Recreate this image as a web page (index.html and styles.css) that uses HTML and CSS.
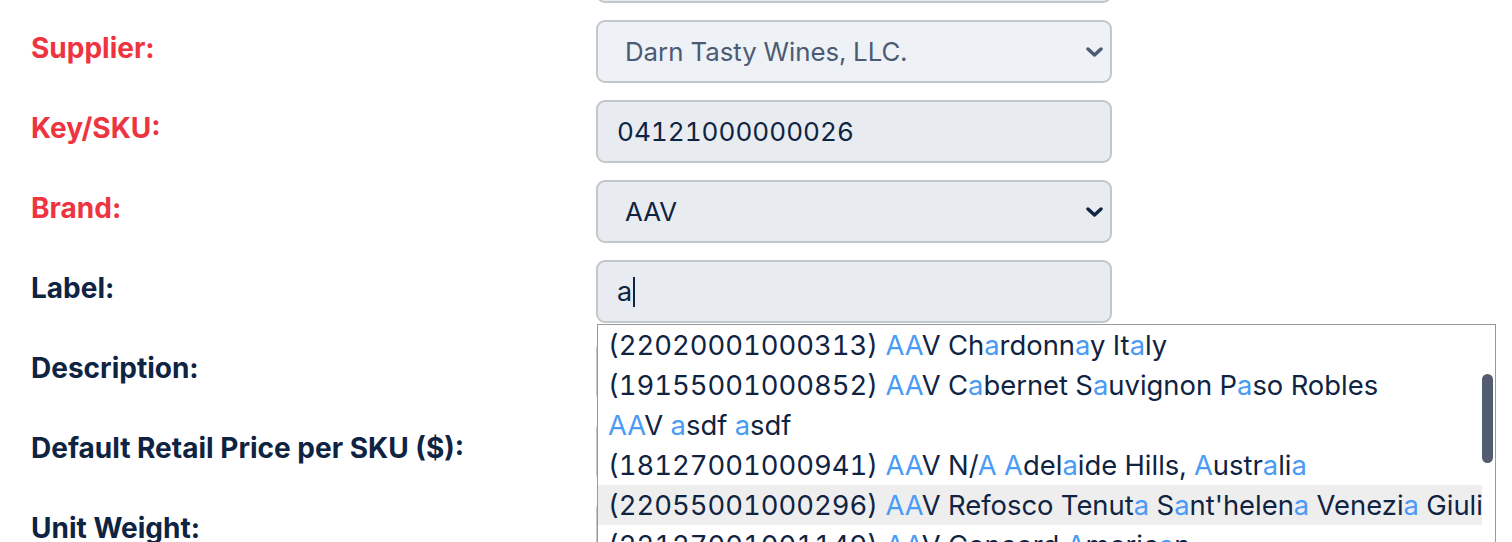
FILE: index.html
```html
<!DOCTYPE html>
<html>
<head>
<meta charset="utf-8">
<link rel="stylesheet" href="styles.css">
</head>
<body>
<form class="form">
  <div class="row">
    <label class="label">Product Name:</label>
    <div class="control"><span class="value">AAV</span></div>
  </div>
  <div class="row">
    <label class="label required">Supplier:</label>
    <div class="control select disabled">
      <span class="value">Darn Tasty Wines, LLC.</span>
      <svg class="chev" width="17" height="10" viewBox="0 0 17 10"><path d="M2 2 L8.5 8 L15 2" fill="none" stroke="currentColor" stroke-width="3.4" stroke-linecap="round" stroke-linejoin="round"/></svg>
    </div>
  </div>
  <div class="row">
    <label class="label required">Key/SKU:</label>
    <div class="control"><span class="value">04121000000026</span></div>
  </div>
  <div class="row">
    <label class="label required">Brand:</label>
    <div class="control select">
      <span class="value">AAV</span>
      <svg class="chev" width="17" height="10" viewBox="0 0 17 10"><path d="M2 2 L8.5 8 L15 2" fill="none" stroke="currentColor" stroke-width="3.4" stroke-linecap="round" stroke-linejoin="round"/></svg>
    </div>
  </div>
  <div class="row">
    <label class="label">Label:</label>
    <div class="control-wrap">
      <div class="control text-a"><span class="value">a</span><span class="caret"></span></div>
      <div class="menu">
        <ul class="items">
          <li class="item">(22020001000313) <b>AA</b>V Ch<b>a</b>rdonn<b>a</b>y It<b>a</b>ly</li>
          <li class="item">(19155001000852) <b>AA</b>V C<b>a</b>bernet S<b>a</b>uvignon P<b>a</b>so Robles</li>
          <li class="item"><b>AA</b>V <b>a</b>sdf <b>a</b>sdf</li>
          <li class="item">(18127001000941) <b>AA</b>V N/<b>A</b> <b>A</b>del<b>a</b>ide Hills, <b>A</b>ustr<b>a</b>li<b>a</b></li>
          <li class="item active">(22055001000296) <b>AA</b>V Refosco Tenut<b>a</b> S<b>a</b>nt'helen<b>a</b> Venezi<b>a</b> Giuli<b>a</b></li>
          <li class="item">(22127001001149) <b>AA</b>V Concord <b>A</b>meric<b>a</b>n</li>
          <li class="item">(21030001000512) <b>AA</b>V Merlot C<b>a</b>liforni<b>a</b></li>
        </ul>
        <div class="gutter"><div class="thumb"></div></div>
      </div>
    </div>
  </div>
  <div class="row">
    <label class="label">Description:</label>
    <div class="control"><span class="value"></span></div>
  </div>
  <div class="row">
    <label class="label">Default Retail Price per SKU ($):</label>
    <div class="control"><span class="value"></span></div>
  </div>
  <div class="row">
    <label class="label">Unit Weight:</label>
    <div class="control"><span class="value"></span></div>
  </div>
</form>
</body>
</html>
```
FILE: styles.css
```css
html, body {
  margin: 0;
  padding: 0;
  background: #ffffff;
  overflow: hidden;
}
body {
  font-family: Inter, "Noto Sans", sans-serif;
  color: #0f2342;
}
.form {
  display: flex;
  flex-direction: column;
  gap: 17px;
  margin-top: -60px;
  padding-left: 31px;
}
.row {
  display: grid;
  grid-template-columns: 565px 516px;
  align-items: center;
}
.label {
  font-size: 28px;
  font-weight: 700;
  line-height: 32px;
  color: #0f2342;
  padding-bottom: 7px;
}
.label.required {
  color: #ee3440;
}
.control-wrap {
  position: relative;
}
.control {
  box-sizing: border-box;
  height: 63px;
  border: 2px solid #c3c7cd;
  border-radius: 9px;
  background: #e8ecf1;
  display: flex;
  align-items: center;
  padding: 0 19px;
  font-size: 26.1px;
  font-variant-numeric: tabular-nums;
  color: #0f2342;
}
.control.text-a {
  font-size: 27px;
}
.control.select {
  padding-left: 27px;
  padding-right: 7px;
  justify-content: space-between;
  font-size: 25.8px;
}
.control.disabled {
  background: #eef1f5;
  color: #4b5b74;
}
.caret {
  display: inline-block;
  width: 2px;
  height: 30px;
  margin-left: 1px;
  background: #0f2342;
}
.chev {
  display: block;
  color: inherit;
}
.menu {
  position: absolute;
  top: 64px;
  left: 1px;
  width: 899px;
  height: 320px;
  box-sizing: border-box;
  border: 1px solid #9a9a9a;
  background: #ffffff;
  display: flex;
  z-index: 5;
}
.items {
  list-style: none;
  margin: 0;
  padding: 0;
  flex: 1;
  min-width: 0;
  overflow: hidden;
}
.item {
  height: 40px;
  line-height: 40px;
  padding-left: 10px;
  font-size: 27.4px;
  font-variant-numeric: tabular-nums;
  white-space: nowrap;
  overflow: hidden;
  color: #0f2342;
}
.item.active {
  background: #eeeeee;
}
.item b {
  font-weight: 400;
  color: #4a9bf5;
}
.gutter {
  width: 13px;
  flex: none;
  padding-top: 49px;
}
.thumb {
  width: 11px;
  height: 89px;
  border-radius: 6px;
  background: #545d6f;
}
```
